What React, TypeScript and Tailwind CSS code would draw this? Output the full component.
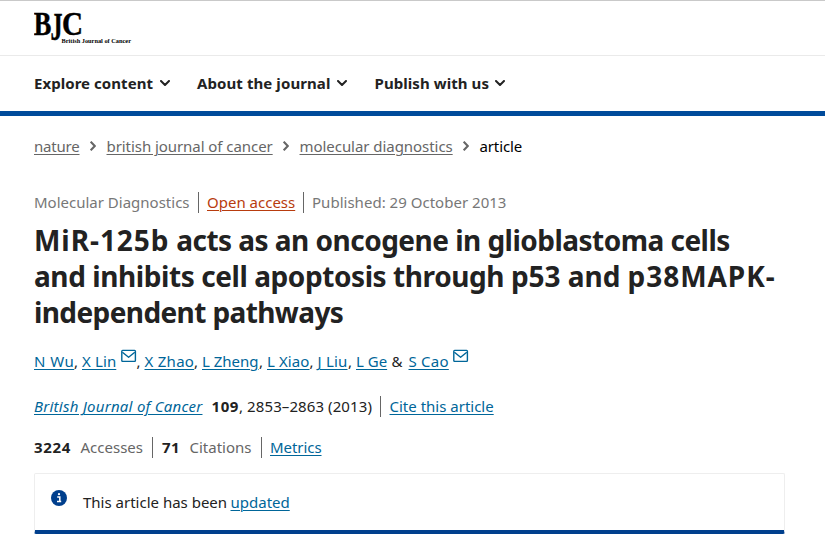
import type { ReactNode } from "react";

function Chevron({ className }: { className: string }) {
  return (
    <svg viewBox="0 0 10 6" className={className} fill="none" stroke="currentColor" strokeWidth="2" strokeLinecap="round" strokeLinejoin="round">
      <path d="M1 1l4 4 4-4" />
    </svg>
  );
}

function Crumb() {
  return (
    <svg viewBox="0 0 6 10" className="mx-[10.5px] h-2.5 w-1.5 shrink-0 text-[#666]" fill="none" stroke="currentColor" strokeWidth="2.1">
      <path d="M.7 .7L4.8 5 .7 9.3" />
    </svg>
  );
}

function Mail() {
  return (
    <svg viewBox="0 0 16 14" className="relative -top-[5px] ml-[4px] h-3.5 w-4 shrink-0" fill="none" stroke="#006699" strokeWidth="1.4" strokeLinejoin="round">
      <rect x=".8" y="1.4" width="13.6" height="11" rx=".8" />
      <path d="M1.4 3.2l6.2 5 6.2-5" />
    </svg>
  );
}

function Text({ className, children }: { className: string; children: ReactNode }) {
  return <span className={`block shrink-0 whitespace-nowrap ${className}`}>{children}</span>;
}

function Link({ className, children }: { className: string; children: ReactNode }) {
  return (
    <a className={`block shrink-0 whitespace-nowrap underline decoration-1 underline-offset-2 ${className}`}>
      {children}
    </a>
  );
}

function Divider({ className }: { className: string }) {
  return <span className={`h-[21px] w-px shrink-0 bg-[#666] ${className}`} />;
}

export default function App() {
  return (
    <div className="h-[539px] overflow-hidden bg-white font-['Noto_Sans',sans-serif] text-[15px] leading-6 text-[#222]">
      <header>
        <div className="h-14 border-t border-b border-t-[#c9c9c9] border-b-[#eaeaea] pl-[34px]">
          <svg viewBox="0 0 100 50" className="h-[50px] w-[100px] fill-black font-['Liberation_Serif',serif] font-bold">
            <g stroke="#000" strokeWidth=".5">
              <text x="-.2" y="34.2" fontSize="34" textLength="17.6" lengthAdjust="spacingAndGlyphs">B</text>
              <text x="16.6" y="38.5" fontSize="40" textLength="12" lengthAdjust="spacingAndGlyphs">J</text>
              <text x="28" y="34.2" fontSize="34" textLength="21" lengthAdjust="spacingAndGlyphs">C</text>
            </g>
            <text x="27.5" y="41.8" fontSize="6" textLength="69.5" lengthAdjust="spacingAndGlyphs">British Journal of Cancer</text>
          </svg>
        </div>
        <nav className="flex h-[60px] items-center border-b-[5px] border-[#004b9b] pb-px pl-[34px] font-bold">
          <Text className="w-[119px] tracking-[0.05px]">Explore content</Text>
          <Chevron className="ml-[7px] h-1.5 w-2.5" />
          <Text className="ml-[27px] w-[134px] tracking-[0.086px]">About the journal</Text>
          <Chevron className="ml-1.5 h-1.5 w-2.5" />
          <Text className="ml-[27.5px] w-[114.5px] tracking-[0.07px]">Publish with us</Text>
          <Chevron className="ml-1.5 h-1.5 w-2.5" />
        </nav>
      </header>

      <main className="pl-[34px]">
        <nav className="mt-[18px] flex h-6 items-center text-[#666]">
          <Link className="w-[45.5px] tracking-[-0.2px]">nature</Link>
          <Crumb />
          <Link className="w-[166px] tracking-[-0.06px]">british journal of cancer</Link>
          <Crumb />
          <Link className="w-[153px] tracking-[-0.05px]">molecular diagnostics</Link>
          <Crumb />
          <Text className="tracking-[-0.13px] text-black">article</Text>
        </nav>

        <div className="mt-8 flex h-6 items-center text-[#777]">
          <Text className="w-[155.5px]">Molecular Diagnostics</Text>
          <Divider className="ml-[8.5px]" />
          <Link className="ml-2 w-[88px] text-[#b83c0e]">Open access</Link>
          <Divider className="ml-2" />
          <Text className="ml-2 tracking-[0.02px]">Published: 29 October 2013</Text>
        </div>

        <h1 className="mt-2 text-[28px] leading-9 font-bold whitespace-nowrap">
          <span className="block tracking-[-0.52px]">
            <span className="tracking-[0.95px]">MiR-125b</span> acts as an oncogene in glioblastoma cells
          </span>
          <span className="block tracking-[-0.42px]">
            and inhibits cell apoptosis through <span className="tracking-[-0.04px]">p53 and </span>
            <span className="tracking-[0.95px]">p38MAPK-</span>
          </span>
          <span className="block tracking-[-0.6px]">independent pathways</span>
        </h1>

        <div className="mt-[19px] flex h-6 items-center">
          <Link className="w-10 tracking-[0.48px] text-[#006699]">N Wu</Link>
          <Text className="w-2">,</Text>
          <Link className="w-[34.5px] tracking-[0.12px] text-[#006699]">X Lin</Link>
          <Mail />
          <Text className="w-2">,</Text>
          <Link className="w-[49.5px] tracking-[0.28px] text-[#006699]">X Zhao</Link>
          <Text className="w-2">,</Text>
          <Link className="w-[57px] text-[#006699]">L Zheng</Link>
          <Text className="w-2">,</Text>
          <Link className="w-[42.5px] tracking-[0.1px] text-[#006699]">L Xiao</Link>
          <Text className="w-2">,</Text>
          <Link className="w-[30.5px] tracking-[0.2px] text-[#006699]">J Liu</Link>
          <Text className="w-2">,</Text>
          <Link className="w-[31px] text-[#006699]">L Ge</Link>
          <Text className="ml-[4.5px] w-[17px] tracking-normal">&amp;</Text>
          <Link className="w-[40.5px] tracking-[0.24px] text-[#006699]">S Cao</Link>
          <Mail />
        </div>

        <div className="mt-[21px] flex h-6 items-center">
          <Link className="w-[168.5px] tracking-[0.247px] text-[#006699] italic">British Journal of Cancer</Link>
          <Text className="ml-[9px] w-[27.5px] font-bold tracking-[0.58px]">109</Text>
          <Text className="w-[133px] tracking-[0.095px]">, 2853–2863 (2013)</Text>
          <Divider className="ml-2" />
          <Link className="ml-[8.5px] text-[#006699]">Cite this article</Link>
        </div>

        <div className="mt-[17px] flex h-6 items-center">
          <Text className="w-[37px] font-bold tracking-[0.66px]">3224</Text>
          <Text className="ml-[9.5px] w-[62.5px] text-[#666]">Accesses</Text>
          <Divider className="ml-[9px]" />
          <Text className="ml-[9px] w-[18px] font-bold tracking-[0.41px]">71</Text>
          <Text className="ml-[9.5px] text-[#666]">Citations</Text>
          <Divider className="ml-[9.5px]" />
          <Link className="ml-2 tracking-[-0.06px] text-[#006699]">Metrics</Link>
        </div>

        <div className="mt-3.5 flex h-[61px] w-[751px] rounded-[2px] border border-b-4 border-[#eee] border-b-[#003f8d] pt-4 pl-4">
          <svg viewBox="0 0 16 16" className="h-4 w-4 shrink-0">
            <circle cx="8" cy="8" r="8" fill="#003f8d" />
            <path d="M6.2 7h2.6v4.6M6 11.6h4.2" fill="none" stroke="#fff" strokeWidth="1.5" />
            <circle cx="8" cy="4.2" r="1.1" fill="#fff" />
          </svg>
          <Text className="ml-4 w-[147.5px]">This article has been</Text>
          <Link className="text-[#006699]">updated</Link>
        </div>
      </main>
    </div>
  );
}
